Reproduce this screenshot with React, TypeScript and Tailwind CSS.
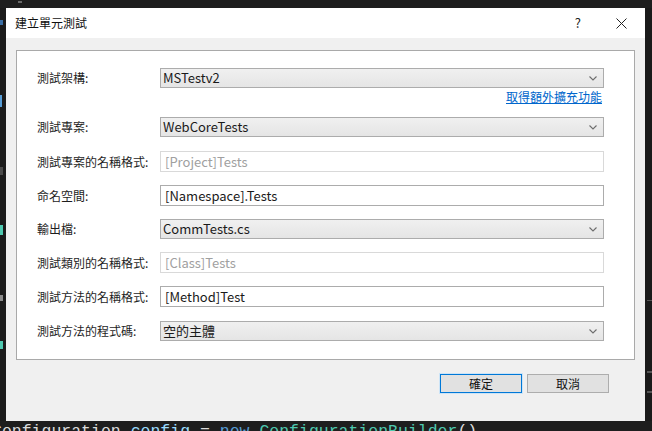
import React from 'react'

const cjk = "font-['Segoe_UI','Noto_Sans_CJK_TC','Noto_Sans',sans-serif]"

function Chevron() {
  return (
    <svg width="8" height="5" viewBox="0 0 8 5" className="shrink-0">
      <path d="M0.5 0.5 L4 4 L7.5 0.5" fill="none" stroke="#6d6d6d" strokeWidth="1.1" />
    </svg>
  )
}

function Dropdown({ value }: { value: string }) {
  return (
    <div className="flex h-[20px] w-[444px] items-center justify-between border border-[#acacac] bg-gradient-to-b from-[#f0f0f0] to-[#e5e5e5] pl-[2px] pr-[6px]">
      <span className="text-[13px] text-[#1a1a1a]">{value}</span>
      <Chevron />
    </div>
  )
}

function TextBox({ value, disabled }: { value: string; disabled?: boolean }) {
  return (
    <div
      className={
        disabled
          ? 'flex h-[21px] w-[444px] items-center border border-[#d9d9d9] bg-white pl-[4px]'
          : 'flex h-[21px] w-[444px] items-center border border-[#acacac] bg-white pl-[4px]'
      }
    >
      <span className={disabled ? 'text-[13px] text-[#a0a0a0]' : 'text-[13px] text-[#1a1a1a]'}>{value}</span>
    </div>
  )
}

function Row({ label, children, className }: { label: string; children: React.ReactNode; className?: string }) {
  return (
    <div className={'flex items-center ' + (className || '')}>
      <div className="w-[123px] text-[12px] text-[#1e1e1e]">{label}</div>
      {children}
    </div>
  )
}

export default function App() {
  return (
    <div className={`flex h-[431px] w-[652px] flex-col overflow-hidden bg-[#1e1e1e] ${cjk}`}>
      {/* editor behind, top strip */}
      <div className="flex h-[8px] shrink-0">
        <div className="ml-[18px] mt-[1px] h-[2px] w-[4px] bg-[#6a6a6a]" />
      </div>

      <div className="flex h-[413px] shrink-0">
        {/* editor left gutter */}
        <div className="flex w-[6px] shrink-0 flex-col bg-[#1b1b1b]">
          <div className="mt-[12px] h-[5px] w-[3px] bg-[#3a6ea5]" />
          <div className="mt-[70px] h-[12px] w-[2px] bg-[#569cd6]" />
          <div className="mt-[60px] h-[8px] w-[3px] bg-[#4a4a4a]" />
          <div className="mt-[50px] h-[10px] w-[3px] bg-[#4ec9b0]" />
          <div className="mt-[60px] h-[6px] w-[3px] bg-[#8a8a8a]" />
          <div className="mt-[40px] h-[8px] w-[3px] bg-[#4ec9b0]" />
        </div>

        {/* dialog */}
        <div className="flex w-[639px] shrink-0 flex-col bg-[#f0f0f0]">
          {/* title bar */}
          <div className="flex h-[30px] shrink-0 items-center bg-white pl-[9px]">
            <span className="text-[12px] text-[#111]">建立單元測試</span>
            <span className="ml-auto text-[13px] text-[#222]">?</span>
            <svg width="11" height="11" viewBox="0 0 11 11" className="ml-[35px] mr-[18px]">
              <path d="M0.5 0.5 L10.5 10.5 M10.5 0.5 L0.5 10.5" stroke="#222" strokeWidth="1" />
            </svg>
          </div>

          {/* content panel */}
          <div className="mx-[10px] mt-[12px] flex h-[310px] flex-col border border-[#a9a9a9] bg-white pl-[20px] pt-[17px]">
            <Row label="測試架構:">
              <Dropdown value="MSTestv2" />
            </Row>
            <div className="mt-[1px] flex h-[16px] w-[565px] justify-end">
              <span className="text-[12px] leading-[16px] text-[#0066cc] underline">取得額外擴充功能</span>
            </div>
            <Row label="測試專案:" className="mt-[12px]">
              <Dropdown value="WebCoreTests" />
            </Row>
            <Row label="測試專案的名稱格式:" className="mt-[14px]">
              <TextBox value="[Project]Tests" disabled />
            </Row>
            <Row label="命名空間:" className="mt-[13px]">
              <TextBox value="[Namespace].Tests" />
            </Row>
            <Row label="輸出檔:" className="mt-[13px]">
              <Dropdown value="CommTests.cs" />
            </Row>
            <Row label="測試類別的名稱格式:" className="mt-[13px]">
              <TextBox value="[Class]Tests" disabled />
            </Row>
            <Row label="測試方法的名稱格式:" className="mt-[13px]">
              <TextBox value="[Method]Test" />
            </Row>
            <Row label="測試方法的程式碼:" className="mt-[14px]">
              <Dropdown value="空的主體" />
            </Row>
          </div>

          {/* buttons */}
          <div className="mt-[14px] flex justify-end gap-[5px] pr-[36px]">
            <button className="h-[19px] w-[82px] border border-[#0078d7] bg-[#e1e1e1] text-[12px] leading-none text-[#111] shadow-[0_0_0_1px_#cce4f7]">
              確定
            </button>
            <button className="h-[19px] w-[82px] border border-[#adadad] bg-[#e1e1e1] text-[12px] leading-none text-[#111]">
              取消
            </button>
          </div>
        </div>

        {/* editor right strip */}
        <div className="flex w-[7px] shrink-0 flex-col bg-[#1a1a1a]">
          <div className="ml-[2px] mt-[292px] h-[1px] w-[5px] bg-[#555]" />
          <div className="ml-[2px] mt-[70px] h-[2px] w-[5px] bg-[#555]" />
          <div className="ml-[2px] mt-[18px] h-[2px] w-[5px] bg-[#555]" />
        </div>
      </div>

      {/* editor code line peeking below */}
      <div className="h-[10px] shrink-0 overflow-hidden">
        <div className="ml-[-8px] mt-[1px] whitespace-pre font-['Liberation_Mono',monospace] text-[16.5px] leading-[20px]">
          <span className="text-[#dcdcdc]">Configuration </span>
          <span className="text-[#9cdcfe]">config</span>
          <span className="text-[#dcdcdc]"> = </span>
          <span className="text-[#569cd6]">new</span>
          <span className="text-[#dcdcdc]"> </span>
          <span className="text-[#4ec9b0]">ConfigurationBuilder</span>
          <span className="text-[#dcdcdc]">()</span>
        </div>
      </div>
    </div>
  )
}
